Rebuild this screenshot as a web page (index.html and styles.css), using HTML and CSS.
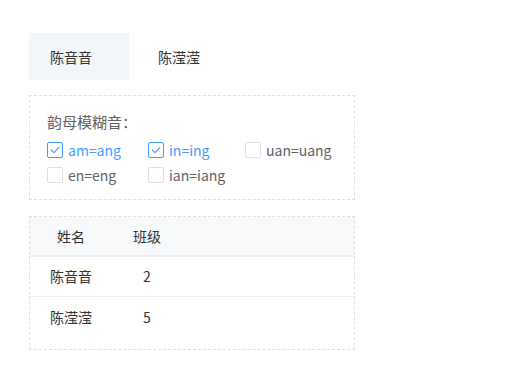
FILE: index.html
```html
<!DOCTYPE html>
<html lang="zh-CN">
<head>
<meta charset="utf-8">
<title>模糊音</title>
<link rel="stylesheet" href="styles.css">
</head>
<body>
<div class="page">
  <div class="tabs">
    <div class="tab active">陈音音</div>
    <div class="tab">陈滢滢</div>
  </div>

  <div class="panel options">
    <div class="options-title">韵母模糊音：</div>
    <div class="checks">
      <label class="check checked">
        <span class="box"><svg viewBox="0 0 16 16" width="16" height="16"><polyline points="4.3,8 7,10.6 12,5.3" fill="none" stroke="#409eff" stroke-width="1.1" stroke-linecap="round" stroke-linejoin="round"/></svg></span>
        <span class="text">am=ang</span>
      </label>
      <label class="check checked">
        <span class="box"><svg viewBox="0 0 16 16" width="16" height="16"><polyline points="4.3,8 7,10.6 12,5.3" fill="none" stroke="#409eff" stroke-width="1.1" stroke-linecap="round" stroke-linejoin="round"/></svg></span>
        <span class="text">in=ing</span>
      </label>
      <label class="check">
        <span class="box"></span>
        <span class="text">uan=uang</span>
      </label>
      <label class="check">
        <span class="box"></span>
        <span class="text">en=eng</span>
      </label>
      <label class="check">
        <span class="box"></span>
        <span class="text">ian=iang</span>
      </label>
    </div>
  </div>

  <div class="panel table">
    <div class="tr head">
      <div class="c1">姓名</div>
      <div class="c2">班级</div>
    </div>
    <div class="tr line">
      <div class="c1">陈音音</div>
      <div class="c2">2</div>
    </div>
    <div class="tr">
      <div class="c1">陈滢滢</div>
      <div class="c2">5</div>
    </div>
  </div>
</div>
</body>
</html>
```

FILE: styles.css
```css
html, body {
  margin: 0;
  padding: 0;
  background: #ffffff;
}

body {
  font-family: "Noto Sans CJK SC", "Noto Sans", sans-serif;
  font-size: 14px;
  color: #333333;
}

.page {
  padding: 33px 0 0 29px;
}

.tabs {
  display: flex;
}

.tab {
  height: 47px;
  box-sizing: border-box;
  padding: 2px 37px 0 21px;
  line-height: 45px;
  color: #333333;
}

.tab + .tab {
  margin-left: 8px;
}

.tab.active {
  background: #f3f6f9;
}

.panel {
  width: 326px;
  box-sizing: border-box;
  border: 1px dashed #dcdfe6;
}

.options {
  margin-top: 15px;
  padding: 16px 17px 14px;
}

.options-title {
  font-size: 15px;
  line-height: 20px;
  color: #606266;
  margin-bottom: 8px;
}

.checks {
  display: grid;
  grid-template-columns: 101px 97px auto;
  justify-content: start;
  row-gap: 5px;
}

.check {
  display: flex;
  align-items: center;
  height: 20px;
  color: #606266;
}

.check .box {
  width: 16px;
  height: 16px;
  box-sizing: border-box;
  border: 1px solid #dcdfe6;
  border-radius: 2px;
  background: #ffffff;
  margin-right: 5px;
  position: relative;
}

.check .box svg {
  position: absolute;
  left: -1px;
  top: -1px;
}

.check.checked .box {
  border-color: #409eff;
}

.check.checked .text {
  color: #409eff;
}

.text {
  line-height: 20px;
}

.table {
  margin-top: 16px;
  padding-bottom: 12px;
}

.tr {
  display: flex;
  height: 40px;
  box-sizing: border-box;
}

.tr > div {
  text-align: center;
}

.c1 {
  width: 82px;
}

.c2 {
  width: 70px;
}

.head {
  background: #f8f9fb;
  border-bottom: 2px solid #ebeef5;
  line-height: 38px;
  color: #303133;
}

.line {
  border-bottom: 1px solid #ebeef5;
  line-height: 39px;
}

.tr:last-child {
  line-height: 40px;
}
```
